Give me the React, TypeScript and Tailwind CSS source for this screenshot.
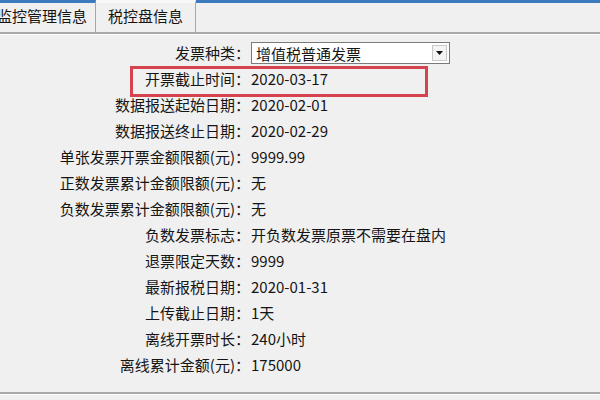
import { ChevronDown } from "lucide-react";

type Row = { label: string; value?: string; select?: boolean };

const rows: Row[] = [
  { label: "发票种类：", value: "增值税普通发票", select: true },
  { label: "开票截止时间：", value: "2020-03-17" },
  { label: "数据报送起始日期：", value: "2020-02-01" },
  { label: "数据报送终止日期：", value: "2020-02-29" },
  { label: "单张发票开票金额限额(元)：", value: "9999.99" },
  { label: "正数发票累计金额限额(元)：", value: "无" },
  { label: "负数发票累计金额限额(元)：", value: "无" },
  { label: "负数发票标志：", value: "开负数发票原票不需要在盘内" },
  { label: "退票限定天数：", value: "9999" },
  { label: "最新报税日期：", value: "2020-01-31" },
  { label: "上传截止日期：", value: "1天" },
  { label: "离线开票时长：", value: "240小时" },
  { label: "离线累计金额(元)：", value: "175000" },
];

function Select({ value }: { value: string }) {
  return (
    <div className="flex h-[22px] w-[199px] items-center border border-[#7a7a7a] bg-white">
      <span className="flex-1 pl-[4px] leading-none">{value}</span>
      <div className="mr-[2px] flex h-[16px] w-[15px] items-center justify-center border border-[#c8c8c8] bg-[#f4f4f4]">
        <svg width="7" height="4" viewBox="0 0 7 4">
          <path d="M0 0h7L3.5 4z" fill="#111" />
        </svg>
      </div>
    </div>
  );
}

export default function App() {
  return (
    <div
      className="relative h-[400px] w-[600px] overflow-hidden bg-[#f0f0f0] text-[15px] text-[#151515]"
      style={{ fontFamily: '"Noto Sans CJK SC", "Noto Sans", sans-serif' }}
    >
      {/* tab strip */}
      <div className="flex h-[32px]">
        <div className="flex w-[96px] items-start overflow-hidden border-t-[3px] border-r border-t-[#3b7bbd] border-r-[#a6a6a6] pt-[2px]">
          <span className="-ml-[3px] whitespace-nowrap">监控管理信息</span>
        </div>
        <div className="flex w-[100px] items-start justify-center border-t-[3px] border-r border-t-[#f8f8f8] border-r-[#a6a6a6] pt-[2px]">
          <span className="whitespace-nowrap">税控盘信息</span>
        </div>
        <div className="flex-1 border-t-[3px] border-t-[#3b7bbd]" />
      </div>
      <div className="h-[2px] border-t-2 border-[#a9a9a9]" />
      <div className="h-[1px] bg-white" />

      {/* fields */}
      <div className="pt-[5px]">
        {rows.map((r) => (
          <div key={r.label} className="flex h-[26px] items-center">
            <div className="w-[250px] whitespace-nowrap text-right">{r.label}</div>
            <div className="pl-[1px] whitespace-nowrap">
              {r.select ? <Select value={r.value ?? ""} /> : r.value}
            </div>
          </div>
        ))}
      </div>

      <div className="mt-[14px] h-[2px] bg-[#a9a9a9]" />
      <div className="h-[1px] bg-white" />

      {/* highlight */}
      <div className="pointer-events-none absolute left-[130px] top-[66px] h-[31px] w-[298px] border-[3px] border-[#d6434f]" />
    </div>
  );
}
